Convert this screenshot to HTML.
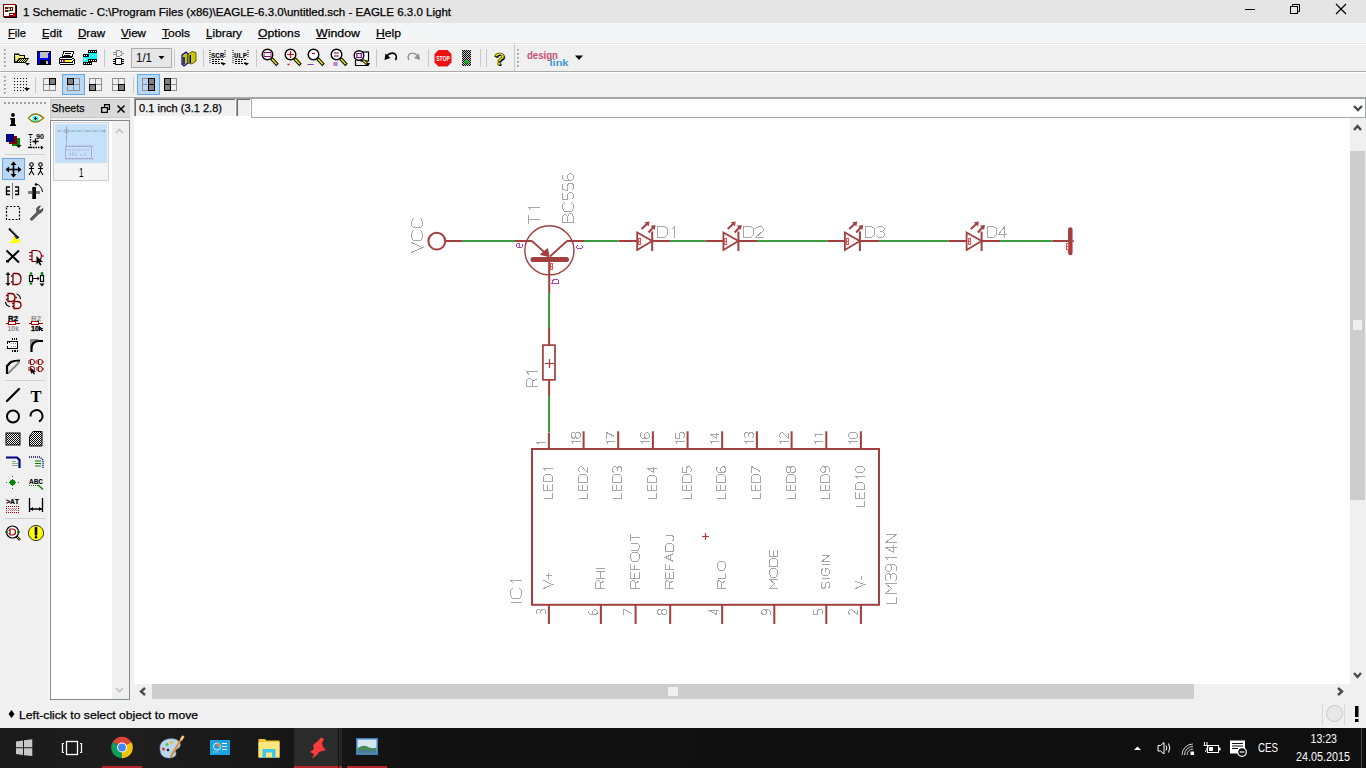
<!DOCTYPE html>
<html><head><meta charset="utf-8">
<style>
*{margin:0;padding:0}
html,body{width:1366px;height:768px;overflow:hidden;background:#f0f0f0}
svg{display:block;font-family:"Liberation Sans",sans-serif}
.ui{font-size:11.5px;fill:#000;stroke:#000;stroke-width:0.25px}
</style></head><body>
<svg width="1366" height="768" viewBox="0 0 1366 768">
<!-- base -->
<rect x="0" y="0" width="1366" height="768" fill="#f0f0f0"/>
<!-- title bar -->
<rect x="0" y="0" width="1366" height="23" fill="#e5e5e5"/>
<text class="ui" x="23" y="16" textLength="428" lengthAdjust="spacingAndGlyphs" font-size="12">1 Schematic - C:\Program Files (x86)\EAGLE-6.3.0\untitled.sch - EAGLE 6.3.0 Light</text>
<!-- menu bar -->
<rect x="0" y="23" width="1366" height="20" fill="#f4f5f7"/>
<rect x="0" y="43" width="1366" height="1" fill="#e3e3e3"/>
<rect x="0" y="44" width="1366" height="1" fill="#ffffff"/>
<g class="ui" font-size="12">
<text x="8" y="36.5" textLength="18" lengthAdjust="spacingAndGlyphs">File</text>
<text x="42" y="36.5" textLength="20" lengthAdjust="spacingAndGlyphs">Edit</text>
<text x="78" y="36.5" textLength="27" lengthAdjust="spacingAndGlyphs">Draw</text>
<text x="121" y="36.5" textLength="25" lengthAdjust="spacingAndGlyphs">View</text>
<text x="162" y="36.5" textLength="28" lengthAdjust="spacingAndGlyphs">Tools</text>
<text x="206" y="36.5" textLength="36" lengthAdjust="spacingAndGlyphs">Library</text>
<text x="258" y="36.5" textLength="42" lengthAdjust="spacingAndGlyphs">Options</text>
<text x="316" y="36.5" textLength="44" lengthAdjust="spacingAndGlyphs">Window</text>
<text x="376" y="36.5" textLength="25" lengthAdjust="spacingAndGlyphs">Help</text>
</g>
<g fill="#000">
<rect x="8" y="38" width="7" height="1"/>
<rect x="42" y="38" width="7" height="1"/>
<rect x="78" y="38" width="8" height="1"/>
<rect x="121" y="38" width="8" height="1"/>
<rect x="162" y="38" width="7" height="1"/>
<rect x="206" y="38" width="6" height="1"/>
<rect x="258" y="38" width="9" height="1"/>
<rect x="316" y="38" width="11" height="1"/>
<rect x="376" y="38" width="9" height="1"/>
</g>
<!-- window buttons -->
<g stroke="#000" stroke-width="1" fill="none">
<line x1="1245" y1="9.5" x2="1255" y2="9.5"/>
<rect x="1290.5" y="6.5" width="7" height="7"/>
<path d="M1292.5 6.5 V4.5 H1299.5 V11.5 H1297.5"/>
<path d="M1336 4 L1346 14 M1346 4 L1336 14" stroke-width="1.2"/>
</g>
<!-- toolbar 1 -->
<rect x="0" y="45" width="1366" height="26" fill="#f0f0f0"/>
<rect x="0" y="71" width="1366" height="1" fill="#ababab"/>
<rect x="0" y="72" width="1366" height="1" fill="#ffffff"/>
<!-- toolbar 2 -->
<rect x="0" y="73" width="1366" height="24" fill="#f0f0f0"/>
<rect x="0" y="97" width="1366" height="1" fill="#ababab"/>
<rect x="0" y="98" width="1366" height="1" fill="#a3a6ae"/>

<!-- command row -->
<rect x="0" y="98" width="134" height="1" fill="#ffffff"/>
<rect x="134" y="98" width="1232" height="1" fill="#a0a0a0"/>
<rect x="134" y="99" width="102" height="18" fill="#f0f0f0"/>
<rect x="134" y="98" width="1" height="19" fill="#a0a0a0"/>
<rect x="135" y="99" width="1" height="17" fill="#696969"/>
<rect x="135" y="99" width="100" height="1" fill="#696969"/>
<rect x="235" y="99" width="1" height="18" fill="#ffffff"/>
<rect x="134" y="116" width="102" height="1" fill="#ffffff"/>
<text class="ui" x="139" y="112" textLength="83" lengthAdjust="spacingAndGlyphs" font-size="12">0.1 inch (3.1 2.8)</text>
<rect x="236" y="99" width="15" height="18" fill="#f0f0f0"/>
<rect x="236" y="98" width="1" height="19" fill="#a0a0a0"/>
<rect x="237" y="99" width="1" height="17" fill="#696969"/>
<rect x="237" y="99" width="13" height="1" fill="#696969"/>
<rect x="250" y="99" width="1" height="18" fill="#ffffff"/>
<rect x="236" y="116" width="15" height="1" fill="#ffffff"/>
<rect x="251" y="99" width="1115" height="18" fill="#ffffff"/>
<rect x="251" y="98" width="1" height="20" fill="#a3a6ae"/>
<rect x="1365" y="98" width="1" height="20" fill="#a3a6ae"/>
<rect x="251" y="117" width="1115" height="1" fill="#a3a6ae"/>
<path d="M1354 106 L1358 110 L1362 106" stroke="#4a4a4a" stroke-width="2.4" fill="none" stroke-linejoin="miter"/>

<!-- canvas -->
<rect x="134" y="117" width="1216" height="567" fill="#ffffff"/>
<rect x="251" y="117" width="1115" height="1" fill="#a3a6ae"/>
<!-- v scrollbar -->
<rect x="1350" y="118" width="16" height="566" fill="#f0f0f0"/>
<rect x="1350" y="151" width="15" height="349" fill="#cdcdcd"/>
<rect x="1353" y="320" width="9" height="10" fill="#f0f0f0"/>
<path d="M1354 130 L1357.5 126 L1361 130" stroke="#4a4a4a" stroke-width="2.4" fill="none" stroke-linejoin="miter"/>
<path d="M1354 673 L1357.5 677 L1361 673" stroke="#4a4a4a" stroke-width="2.4" fill="none" stroke-linejoin="miter"/>
<!-- h scrollbar -->
<rect x="134" y="684" width="1232" height="15" fill="#f0f0f0"/>
<rect x="152" y="684" width="1042" height="15" fill="#cdcdcd"/>
<rect x="668" y="687" width="10" height="9" fill="#f0f0f0"/>
<path d="M145 688 L141 691.5 L145 695" stroke="#4a4a4a" stroke-width="2.4" fill="none" stroke-linejoin="miter"/>
<path d="M1338 688 L1342 691.5 L1338 695" stroke="#4a4a4a" stroke-width="2.4" fill="none" stroke-linejoin="miter"/>

<!-- left toolbar panel -->
<rect x="49" y="99" width="1" height="600" fill="#ffffff"/>
<rect x="50" y="99" width="1" height="600" fill="#c4c4c4"/>
<!-- sheets panel -->
<rect x="51" y="99" width="79" height="19" fill="#d9d9d9"/>
<rect x="51" y="99" width="79" height="1" fill="#c8c8c8"/>
<rect x="51" y="117" width="79" height="1" fill="#c8c8c8"/>
<text class="ui" x="51.5" y="112" textLength="33" lengthAdjust="spacingAndGlyphs" font-size="12">Sheets</text>
<g fill="none" stroke="#000" stroke-width="1.3">
<rect x="101.6" y="107.6" width="5.8" height="4.8"/>
<path d="M104.6 107 V104.6 H109.4 V109.4 H107.5"/>
<path d="M117.5 105.5 L124.5 112.5 M124.5 105.5 L117.5 112.5" stroke-width="1.5"/>
</g>
<rect x="50.5" y="120.5" width="79" height="579" fill="#ffffff" stroke="#828790"/>
<rect x="112" y="121" width="17" height="578" fill="#f0f0f0"/>
<path d="M116 133 L119.5 129.5 L123 133" stroke="#c0c0c0" stroke-width="1.6" fill="none"/>
<path d="M116 688 L119.5 691.5 L123 688" stroke="#c0c0c0" stroke-width="1.6" fill="none"/>
<rect x="130" y="99" width="4" height="600" fill="#f0f0f0"/>

<!-- status bar -->
<rect x="0" y="700" width="1366" height="28" fill="#f0f0f0"/>
<text class="ui" x="19" y="718.5" textLength="179" lengthAdjust="spacingAndGlyphs" font-size="12">Left-click to select object to move</text>
<path d="M11.5 710 L14.5 714 L11.5 718 L8.5 714 Z" fill="#000"/>
<rect x="1322" y="704" width="1" height="22" fill="#d8d8d8"/>
<rect x="1344" y="704" width="1" height="22" fill="#d8d8d8"/>
<circle cx="1334.5" cy="713.5" r="8" fill="#e8e8e8" stroke="#c8c8c8"/>
<rect x="1355" y="706" width="3.5" height="11" fill="#000"/>
<rect x="1355" y="719" width="3.5" height="3" fill="#000"/>

<!-- taskbar bg drawn in icons -->


<g id="schematic">
<rect x="462" y="240.0" width="53" height="2" fill="#3d9c3d"/>
<rect x="584" y="240.0" width="34.5" height="2" fill="#3d9c3d"/>
<rect x="670" y="240.0" width="35.5" height="2" fill="#3d9c3d"/>
<rect x="757" y="240.0" width="70.5" height="2" fill="#3d9c3d"/>
<rect x="879" y="240.0" width="69.5" height="2" fill="#3d9c3d"/>
<rect x="1000" y="240.0" width="52.5" height="2" fill="#3d9c3d"/>
<rect x="548.0" y="293" width="2" height="35" fill="#3d9c3d"/>
<rect x="548.0" y="396" width="2" height="36" fill="#3d9c3d"/>
<circle cx="436.8" cy="241.2" r="8.4" fill="none" stroke="#a23f3f" stroke-width="2"/>
<rect x="445" y="240.0" width="17" height="2" fill="#a23f3f"/>
<rect x="515" y="240.0" width="17" height="2" fill="#a23f3f"/>
<rect x="567" y="240.0" width="17.5" height="2" fill="#a23f3f"/>
<circle cx="549.4" cy="250.3" r="24.6" fill="none" stroke="#a23f3f" stroke-width="1.4"/>
<line x1="532" y1="241" x2="548.5" y2="256" stroke="#a23f3f" stroke-width="1.8"/>
<line x1="567" y1="241" x2="550" y2="256.5" stroke="#a23f3f" stroke-width="1.8"/>
<path d="M549 256.5 L540.5 254.5 L547.5 248.5 Z" fill="#a23f3f" stroke="#a23f3f" stroke-width="1"/>
<line x1="533" y1="259.5" x2="566.5" y2="259.5" stroke="#a23f3f" stroke-width="5" stroke-linecap="round"/>
<rect x="548.2" y="257" width="2" height="36" fill="#a23f3f"/>
<rect x="550.5" y="263.5" width="2" height="6" fill="none" stroke="#ff4a4a" stroke-width="1" shape-rendering="crispEdges"/><rect x="551" y="266" width="1" height="1" fill="#ff4a4a"/>
<path d="M519.5 247.5 L519.5 243.5 L517.5 243.5 L516.5 244.5 L516.5 246.5 L517.5 247.5 L521.5 247.5 L522.5 246.5 L522.5 243.5" fill="none" stroke="#a844b4" stroke-width="1.0" shape-rendering="crispEdges"/>
<path d="M577.5 245.5 L576.5 246.5 L576.5 247.5 L577.5 248.5 L581.5 248.5 L582.5 247.5 L582.5 246.5 L581.5 245.5" fill="none" stroke="#a844b4" stroke-width="1.0" shape-rendering="crispEdges"/>
<path d="M550.5 283.5 L558.5 283.5 L558.5 280.5 L557.5 279.5 L554.5 279.5 L552.5 280.5 L552.5 283.5" fill="none" stroke="#a844b4" stroke-width="1.0" shape-rendering="crispEdges"/>
<path d="M528.5 223.5 L528.5 214.5 M528.5 219.5 L539.5 219.5 M531.5 210.5 L528.5 207.5 L539.5 207.5" fill="none" stroke="#a6a6a6" stroke-width="1.0" shape-rendering="crispEdges"/>
<path d="M562.5 222.5 L573.5 222.5 L573.5 216.5 L571.5 213.5 L569.5 213.5 L567.5 216.5 L567.5 222.5 M567.5 216.5 L565.5 214.5 L564.5 214.5 L562.5 216.5 L562.5 222.5 M564.5 202.5 L562.5 204.5 L562.5 208.5 L564.5 211.5 L571.5 211.5 L573.5 208.5 L573.5 204.5 L571.5 202.5 M562.5 192.5 L562.5 199.5 L567.5 199.5 L567.5 194.5 L569.5 192.5 L571.5 192.5 L573.5 194.5 L573.5 197.5 L571.5 199.5 M562.5 183.5 L562.5 189.5 L567.5 190.5 L567.5 184.5 L569.5 183.5 L571.5 183.5 L573.5 184.5 L573.5 188.5 L571.5 190.5 M562.5 174.5 L562.5 174.5 L562.5 178.5 L564.5 180.5 L571.5 180.5 L573.5 178.5 L573.5 175.5 L571.5 173.5 L569.5 173.5 L567.5 175.5 L567.5 178.5 L569.5 180.5" fill="none" stroke="#a6a6a6" stroke-width="1.0" shape-rendering="crispEdges"/>
<path d="M411.5 252.5 L422.5 247.5 L411.5 242.5 M413.5 230.5 L411.5 233.5 L411.5 237.5 L413.5 240.5 L420.5 240.5 L422.5 237.5 L422.5 233.5 L420.5 230.5 M413.5 218.5 L411.5 221.5 L411.5 225.5 L413.5 227.5 L420.5 227.5 L422.5 225.5 L422.5 221.5 L420.5 218.5" fill="none" stroke="#a6a6a6" stroke-width="1.0" shape-rendering="crispEdges"/>
<rect x="618.5" y="240.0" width="18.700000000000045" height="2" fill="#a23f3f"/>
<rect x="652.2" y="240.0" width="17.799999999999955" height="2" fill="#a23f3f"/>
<path d="M637.2 232.5 L652.2 241 L637.2 250 Z" fill="none" stroke="#a23f3f" stroke-width="1.8" stroke-linejoin="miter"/>
<rect x="651.2" y="231.5" width="2" height="19.5" fill="#a23f3f"/>
<line x1="641.5" y1="229" x2="648.0" y2="223.0" stroke="#a23f3f" stroke-width="2"/>
<path d="M649.5 221.5 L644.5 222.3 L648.7 226.5 Z" fill="#a23f3f"/>
<line x1="648.5" y1="232.5" x2="654.0" y2="226.5" stroke="#a23f3f" stroke-width="2"/>
<path d="M655.5 225 L650.5 225.8 L654.7 230 Z" fill="#a23f3f"/>
<rect x="638.5" y="238.5" width="2" height="6" fill="none" stroke="#ff4a4a" stroke-width="1" shape-rendering="crispEdges"/><rect x="639" y="241" width="1" height="1" fill="#ff4a4a"/>
<path d="M657.5 226.5 L657.5 237.5 L664.5 237.5 L667.5 234.5 L667.5 228.5 L664.5 226.5 Z M671.5 229.5 L674.5 226.5 L674.5 237.5" fill="none" stroke="#a6a6a6" stroke-width="1.0" shape-rendering="crispEdges"/>
<rect x="705.5" y="240.0" width="17.899999999999977" height="2" fill="#a23f3f"/>
<rect x="738.4" y="240.0" width="18.600000000000023" height="2" fill="#a23f3f"/>
<path d="M723.4 232.5 L738.4 241 L723.4 250 Z" fill="none" stroke="#a23f3f" stroke-width="1.8" stroke-linejoin="miter"/>
<rect x="737.4" y="231.5" width="2" height="19.5" fill="#a23f3f"/>
<line x1="727.6999999999999" y1="229" x2="734.1999999999999" y2="223.0" stroke="#a23f3f" stroke-width="2"/>
<path d="M735.6999999999999 221.5 L730.6999999999999 222.3 L734.9 226.5 Z" fill="#a23f3f"/>
<line x1="734.6999999999999" y1="232.5" x2="740.1999999999999" y2="226.5" stroke="#a23f3f" stroke-width="2"/>
<path d="M741.6999999999999 225 L736.6999999999999 225.8 L740.9 230 Z" fill="#a23f3f"/>
<rect x="724.5" y="238.5" width="2" height="6" fill="none" stroke="#ff4a4a" stroke-width="1" shape-rendering="crispEdges"/><rect x="725" y="241" width="1" height="1" fill="#ff4a4a"/>
<path d="M743.5 226.5 L743.5 237.5 L750.5 237.5 L753.5 234.5 L753.5 228.5 L750.5 226.5 Z M755.5 228.5 L758.5 226.5 L761.5 226.5 L763.5 228.5 L763.5 230.5 L755.5 237.5 L763.5 237.5" fill="none" stroke="#a6a6a6" stroke-width="1.0" shape-rendering="crispEdges"/>
<rect x="827.5" y="240.0" width="17.399999999999977" height="2" fill="#a23f3f"/>
<rect x="859.9" y="240.0" width="19.100000000000023" height="2" fill="#a23f3f"/>
<path d="M844.9 232.5 L859.9 241 L844.9 250 Z" fill="none" stroke="#a23f3f" stroke-width="1.8" stroke-linejoin="miter"/>
<rect x="858.9" y="231.5" width="2" height="19.5" fill="#a23f3f"/>
<line x1="849.1999999999999" y1="229" x2="855.6999999999999" y2="223.0" stroke="#a23f3f" stroke-width="2"/>
<path d="M857.1999999999999 221.5 L852.1999999999999 222.3 L856.4 226.5 Z" fill="#a23f3f"/>
<line x1="856.1999999999999" y1="232.5" x2="861.6999999999999" y2="226.5" stroke="#a23f3f" stroke-width="2"/>
<path d="M863.1999999999999 225 L858.1999999999999 225.8 L862.4 230 Z" fill="#a23f3f"/>
<rect x="846.5" y="238.5" width="2" height="6" fill="none" stroke="#ff4a4a" stroke-width="1" shape-rendering="crispEdges"/><rect x="847" y="241" width="1" height="1" fill="#ff4a4a"/>
<path d="M865.5 226.5 L865.5 237.5 L871.5 237.5 L874.5 234.5 L874.5 228.5 L871.5 226.5 Z M876.5 228.5 L878.5 226.5 L882.5 226.5 L884.5 228.5 L884.5 229.5 L882.5 231.5 L879.5 231.5 M882.5 231.5 L884.5 233.5 L884.5 235.5 L882.5 237.5 L878.5 237.5 L876.5 235.5" fill="none" stroke="#a6a6a6" stroke-width="1.0" shape-rendering="crispEdges"/>
<rect x="948.5" y="240.0" width="18.100000000000023" height="2" fill="#a23f3f"/>
<rect x="981.6" y="240.0" width="18.399999999999977" height="2" fill="#a23f3f"/>
<path d="M966.6 232.5 L981.6 241 L966.6 250 Z" fill="none" stroke="#a23f3f" stroke-width="1.8" stroke-linejoin="miter"/>
<rect x="980.6" y="231.5" width="2" height="19.5" fill="#a23f3f"/>
<line x1="970.9" y1="229" x2="977.4" y2="223.0" stroke="#a23f3f" stroke-width="2"/>
<path d="M978.9 221.5 L973.9 222.3 L978.1 226.5 Z" fill="#a23f3f"/>
<line x1="977.9" y1="232.5" x2="983.4" y2="226.5" stroke="#a23f3f" stroke-width="2"/>
<path d="M984.9 225 L979.9 225.8 L984.1 230 Z" fill="#a23f3f"/>
<rect x="968.5" y="238.5" width="2" height="6" fill="none" stroke="#ff4a4a" stroke-width="1" shape-rendering="crispEdges"/><rect x="969" y="241" width="1" height="1" fill="#ff4a4a"/>
<path d="M987.5 226.5 L987.5 237.5 L993.5 237.5 L996.5 234.5 L996.5 228.5 L993.5 226.5 Z M1004.5 237.5 L1004.5 226.5 L998.5 234.5 L1006.5 234.5" fill="none" stroke="#a6a6a6" stroke-width="1.0" shape-rendering="crispEdges"/>
<rect x="1052.5" y="240.0" width="19.5" height="2" fill="#a23f3f"/>
<line x1="1070.3" y1="229.5" x2="1070.3" y2="253" stroke="#a23f3f" stroke-width="4.5" stroke-linecap="round"/>
<rect x="1072" y="240.25" width="2" height="1.5" fill="#a23f3f"/>
<rect x="1066.5" y="243.5" width="2" height="6" fill="none" stroke="#ff4a4a" stroke-width="1" shape-rendering="crispEdges"/><rect x="1067" y="246" width="1" height="1" fill="#ff4a4a"/>
<rect x="548.1" y="328" width="2" height="17" fill="#a23f3f"/>
<rect x="542.9" y="345.1" width="12.1" height="34.7" fill="none" stroke="#a23f3f" stroke-width="1.7"/>
<rect x="548.1" y="380" width="2" height="16" fill="#a23f3f"/>
<rect x="545" y="362.9" width="9" height="1.2" fill="#a23f3f"/>
<rect x="548.9" y="359" width="1.2" height="9" fill="#a23f3f"/>
<path d="M537.5 386.5 L526.5 386.5 L526.5 380.5 L528.5 378.5 L530.5 378.5 L532.5 380.5 L532.5 386.5 M532.5 381.5 L537.5 378.5 M529.5 375.5 L526.5 371.5 L537.5 371.5" fill="none" stroke="#a6a6a6" stroke-width="1.0" shape-rendering="crispEdges"/>
<rect x="532" y="449" width="347" height="155.8" fill="none" stroke="#a23f3f" stroke-width="2"/>
<rect x="547.9" y="432.5" width="2" height="16.5" fill="#a23f3f"/>
<path d="M539.5 444.5 L536.5 442.5 L545.5 442.5" fill="none" stroke="#a6a6a6" stroke-width="1.0" shape-rendering="crispEdges"/>
<path d="M543.5 498.5 L552.5 498.5 L552.5 492.5 M543.5 483.5 L543.5 490.5 L552.5 490.5 L552.5 483.5 M547.5 490.5 L547.5 484.5 M543.5 481.5 L552.5 481.5 L552.5 476.5 L550.5 474.5 L545.5 474.5 L543.5 476.5 Z M546.5 471.5 L543.5 468.5 L552.5 468.5" fill="none" stroke="#a6a6a6" stroke-width="1.0" shape-rendering="crispEdges"/>
<rect x="582.6" y="431.3" width="2" height="17.69999999999999" fill="#a23f3f"/>
<path d="M573.5 444.5 L571.5 441.5 L580.5 441.5 M571.5 436.5 L571.5 433.5 L572.5 432.5 L574.5 432.5 L575.5 433.5 L575.5 436.5 L574.5 438.5 L572.5 438.5 Z M575.5 436.5 L576.5 438.5 L578.5 438.5 L580.5 436.5 L580.5 433.5 L578.5 432.5 L576.5 432.5 L575.5 433.5" fill="none" stroke="#a6a6a6" stroke-width="1.0" shape-rendering="crispEdges"/>
<path d="M578.5 498.5 L587.5 498.5 L587.5 492.5 M578.5 484.5 L578.5 490.5 L587.5 490.5 L587.5 484.5 M582.5 490.5 L582.5 484.5 M578.5 482.5 L587.5 482.5 L587.5 476.5 L585.5 474.5 L580.5 474.5 L578.5 476.5 Z M580.5 472.5 L578.5 470.5 L578.5 468.5 L580.5 466.5 L581.5 466.5 L587.5 472.5 L587.5 466.5" fill="none" stroke="#a6a6a6" stroke-width="1.0" shape-rendering="crispEdges"/>
<rect x="617.2" y="431.3" width="2" height="17.69999999999999" fill="#a23f3f"/>
<path d="M608.5 444.5 L606.5 441.5 L614.5 441.5 M606.5 438.5 L606.5 432.5 L614.5 436.5" fill="none" stroke="#a6a6a6" stroke-width="1.0" shape-rendering="crispEdges"/>
<path d="M612.5 498.5 L621.5 498.5 L621.5 492.5 M612.5 484.5 L612.5 490.5 L621.5 490.5 L621.5 484.5 M616.5 490.5 L616.5 484.5 M612.5 482.5 L621.5 482.5 L621.5 476.5 L619.5 474.5 L614.5 474.5 L612.5 476.5 Z M614.5 472.5 L612.5 471.5 L612.5 468.5 L614.5 466.5 L615.5 466.5 L617.5 468.5 L617.5 470.5 M617.5 468.5 L618.5 466.5 L620.5 466.5 L621.5 468.5 L621.5 471.5 L620.5 472.5" fill="none" stroke="#a6a6a6" stroke-width="1.0" shape-rendering="crispEdges"/>
<rect x="651.9" y="431.3" width="2" height="17.69999999999999" fill="#a23f3f"/>
<path d="M643.5 444.5 L640.5 441.5 L649.5 441.5 M641.5 432.5 L640.5 433.5 L640.5 436.5 L642.5 438.5 L647.5 438.5 L649.5 436.5 L649.5 434.5 L647.5 432.5 L646.5 432.5 L644.5 434.5 L644.5 436.5 L645.5 438.5" fill="none" stroke="#a6a6a6" stroke-width="1.0" shape-rendering="crispEdges"/>
<path d="M647.5 498.5 L656.5 498.5 L656.5 492.5 M647.5 484.5 L647.5 490.5 L656.5 490.5 L656.5 484.5 M651.5 490.5 L651.5 484.5 M647.5 482.5 L656.5 482.5 L656.5 477.5 L654.5 475.5 L649.5 475.5 L647.5 477.5 Z M656.5 468.5 L647.5 468.5 L653.5 472.5 L653.5 466.5" fill="none" stroke="#a6a6a6" stroke-width="1.0" shape-rendering="crispEdges"/>
<rect x="686.6" y="431.3" width="2" height="17.69999999999999" fill="#a23f3f"/>
<path d="M677.5 444.5 L675.5 441.5 L684.5 441.5 M675.5 432.5 L675.5 438.5 L679.5 438.5 L679.5 433.5 L680.5 432.5 L682.5 432.5 L684.5 433.5 L684.5 436.5 L682.5 438.5" fill="none" stroke="#a6a6a6" stroke-width="1.0" shape-rendering="crispEdges"/>
<path d="M682.5 498.5 L691.5 498.5 L691.5 492.5 M682.5 484.5 L682.5 490.5 L691.5 490.5 L691.5 484.5 M686.5 490.5 L686.5 484.5 M682.5 482.5 L691.5 482.5 L691.5 476.5 L689.5 474.5 L684.5 474.5 L682.5 476.5 Z M682.5 466.5 L682.5 472.5 L686.5 472.5 L686.5 468.5 L687.5 466.5 L689.5 466.5 L691.5 468.5 L691.5 470.5 L689.5 472.5" fill="none" stroke="#a6a6a6" stroke-width="1.0" shape-rendering="crispEdges"/>
<rect x="721.2" y="431.3" width="2" height="17.69999999999999" fill="#a23f3f"/>
<path d="M712.5 444.5 L710.5 441.5 L718.5 441.5 M718.5 434.5 L710.5 434.5 L716.5 438.5 L716.5 432.5" fill="none" stroke="#a6a6a6" stroke-width="1.0" shape-rendering="crispEdges"/>
<path d="M716.5 498.5 L725.5 498.5 L725.5 492.5 M716.5 484.5 L716.5 490.5 L725.5 490.5 L725.5 484.5 M720.5 490.5 L720.5 484.5 M716.5 482.5 L725.5 482.5 L725.5 476.5 L723.5 474.5 L718.5 474.5 L716.5 476.5 Z M717.5 467.5 L716.5 467.5 L716.5 470.5 L718.5 472.5 L724.5 472.5 L725.5 470.5 L725.5 468.5 L724.5 466.5 L722.5 466.5 L720.5 468.5 L720.5 470.5 L722.5 472.5" fill="none" stroke="#a6a6a6" stroke-width="1.0" shape-rendering="crispEdges"/>
<rect x="755.9" y="431.3" width="2" height="17.69999999999999" fill="#a23f3f"/>
<path d="M747.5 444.5 L744.5 441.5 L753.5 441.5 M746.5 438.5 L744.5 436.5 L744.5 433.5 L746.5 432.5 L747.5 432.5 L748.5 433.5 L748.5 436.5 M748.5 433.5 L750.5 432.5 L751.5 432.5 L753.5 433.5 L753.5 436.5 L751.5 438.5" fill="none" stroke="#a6a6a6" stroke-width="1.0" shape-rendering="crispEdges"/>
<path d="M751.5 498.5 L760.5 498.5 L760.5 492.5 M751.5 484.5 L751.5 490.5 L760.5 490.5 L760.5 484.5 M755.5 490.5 L755.5 484.5 M751.5 482.5 L760.5 482.5 L760.5 476.5 L758.5 474.5 L753.5 474.5 L751.5 476.5 Z M751.5 472.5 L751.5 466.5 L760.5 471.5" fill="none" stroke="#a6a6a6" stroke-width="1.0" shape-rendering="crispEdges"/>
<rect x="790.6" y="431.3" width="2" height="17.69999999999999" fill="#a23f3f"/>
<path d="M781.5 444.5 L779.5 441.5 L788.5 441.5 M781.5 438.5 L779.5 436.5 L779.5 434.5 L781.5 432.5 L782.5 432.5 L788.5 438.5 L788.5 432.5" fill="none" stroke="#a6a6a6" stroke-width="1.0" shape-rendering="crispEdges"/>
<path d="M786.5 498.5 L795.5 498.5 L795.5 492.5 M786.5 484.5 L786.5 490.5 L795.5 490.5 L795.5 484.5 M790.5 490.5 L790.5 484.5 M786.5 482.5 L795.5 482.5 L795.5 476.5 L793.5 474.5 L788.5 474.5 L786.5 476.5 Z M786.5 471.5 L786.5 468.5 L787.5 466.5 L789.5 466.5 L790.5 468.5 L790.5 471.5 L789.5 472.5 L787.5 472.5 Z M790.5 471.5 L791.5 472.5 L793.5 472.5 L795.5 471.5 L795.5 468.5 L793.5 466.5 L791.5 466.5 L790.5 468.5" fill="none" stroke="#a6a6a6" stroke-width="1.0" shape-rendering="crispEdges"/>
<rect x="825.3" y="431.3" width="2" height="17.69999999999999" fill="#a23f3f"/>
<path d="M816.5 444.5 L814.5 441.5 L822.5 441.5 M816.5 437.5 L814.5 434.5 L822.5 434.5" fill="none" stroke="#a6a6a6" stroke-width="1.0" shape-rendering="crispEdges"/>
<path d="M820.5 498.5 L829.5 498.5 L829.5 492.5 M820.5 484.5 L820.5 490.5 L829.5 490.5 L829.5 484.5 M825.5 490.5 L825.5 484.5 M820.5 482.5 L829.5 482.5 L829.5 476.5 L827.5 474.5 L823.5 474.5 L820.5 476.5 Z M829.5 471.5 L829.5 471.5 L829.5 468.5 L827.5 466.5 L822.5 466.5 L820.5 468.5 L820.5 470.5 L822.5 472.5 L824.5 472.5 L825.5 470.5 L825.5 468.5 L824.5 466.5" fill="none" stroke="#a6a6a6" stroke-width="1.0" shape-rendering="crispEdges"/>
<rect x="859.9" y="431.3" width="2" height="17.69999999999999" fill="#a23f3f"/>
<path d="M851.5 444.5 L848.5 441.5 L857.5 441.5 M848.5 436.5 L848.5 434.5 L850.5 432.5 L855.5 432.5 L857.5 434.5 L857.5 436.5 L855.5 438.5 L850.5 438.5 Z" fill="none" stroke="#a6a6a6" stroke-width="1.0" shape-rendering="crispEdges"/>
<path d="M855.5 506.5 L864.5 506.5 L864.5 500.5 M855.5 491.5 L855.5 498.5 L864.5 498.5 L864.5 491.5 M859.5 498.5 L859.5 492.5 M855.5 489.5 L864.5 489.5 L864.5 484.5 L862.5 482.5 L857.5 482.5 L855.5 484.5 Z M858.5 479.5 L855.5 476.5 L864.5 476.5 M855.5 470.5 L855.5 468.5 L857.5 466.5 L862.5 466.5 L864.5 468.5 L864.5 470.5 L862.5 472.5 L857.5 472.5 Z" fill="none" stroke="#a6a6a6" stroke-width="1.0" shape-rendering="crispEdges"/>
<rect x="547.9" y="605" width="2" height="19" fill="#a23f3f"/>
<path d="M537.5 614.5 L536.5 613.5 L536.5 610.5 L537.5 609.5 L539.5 609.5 L540.5 610.5 L540.5 612.5 M540.5 610.5 L542.5 609.5 L544.5 609.5 L545.5 610.5 L545.5 613.5 L544.5 614.5" fill="none" stroke="#a6a6a6" stroke-width="1.0" shape-rendering="crispEdges"/>
<path d="M543.5 588.5 L552.5 584.5 L543.5 580.5 M548.5 578.5 L548.5 572.5 M545.5 575.5 L551.5 575.5" fill="none" stroke="#a6a6a6" stroke-width="1.0" shape-rendering="crispEdges"/>
<rect x="599.9" y="605" width="2" height="19" fill="#a23f3f"/>
<path d="M588.5 610.5 L588.5 610.5 L588.5 612.5 L590.5 614.5 L595.5 614.5 L597.5 613.5 L597.5 611.5 L595.5 609.5 L594.5 609.5 L592.5 611.5 L592.5 613.5 L593.5 614.5" fill="none" stroke="#a6a6a6" stroke-width="1.0" shape-rendering="crispEdges"/>
<path d="M604.5 588.5 L595.5 588.5 L595.5 582.5 L597.5 580.5 L598.5 580.5 L600.5 582.5 L600.5 588.5 M600.5 583.5 L604.5 580.5 M595.5 578.5 L604.5 578.5 M595.5 571.5 L604.5 571.5 M600.5 578.5 L600.5 571.5 M595.5 568.5 L604.5 568.5" fill="none" stroke="#a6a6a6" stroke-width="1.0" shape-rendering="crispEdges"/>
<rect x="634.6" y="605" width="2" height="19" fill="#a23f3f"/>
<path d="M623.5 614.5 L623.5 609.5 L632.5 613.5" fill="none" stroke="#a6a6a6" stroke-width="1.0" shape-rendering="crispEdges"/>
<path d="M639.5 588.5 L630.5 588.5 L630.5 582.5 L632.5 580.5 L633.5 580.5 L635.5 582.5 L635.5 588.5 M635.5 583.5 L639.5 580.5 M630.5 571.5 L630.5 578.5 L639.5 578.5 L639.5 571.5 M634.5 578.5 L634.5 572.5 M630.5 563.5 L630.5 569.5 L639.5 569.5 M634.5 569.5 L634.5 564.5 M630.5 558.5 L630.5 554.5 L632.5 552.5 L637.5 552.5 L639.5 554.5 L639.5 558.5 L637.5 561.5 L632.5 561.5 Z M630.5 550.5 L637.5 550.5 L639.5 547.5 L639.5 545.5 L637.5 543.5 L630.5 543.5 M630.5 540.5 L630.5 533.5 M630.5 537.5 L639.5 537.5" fill="none" stroke="#a6a6a6" stroke-width="1.0" shape-rendering="crispEdges"/>
<rect x="669.2" y="605" width="2" height="19" fill="#a23f3f"/>
<path d="M657.5 613.5 L657.5 610.5 L659.5 609.5 L660.5 609.5 L661.5 610.5 L661.5 613.5 L660.5 614.5 L659.5 614.5 Z M661.5 613.5 L663.5 614.5 L665.5 614.5 L666.5 613.5 L666.5 610.5 L665.5 609.5 L663.5 609.5 L661.5 610.5" fill="none" stroke="#a6a6a6" stroke-width="1.0" shape-rendering="crispEdges"/>
<path d="M673.5 588.5 L665.5 588.5 L665.5 582.5 L666.5 580.5 L667.5 580.5 L669.5 582.5 L669.5 588.5 M669.5 583.5 L673.5 580.5 M665.5 571.5 L665.5 578.5 L673.5 578.5 L673.5 571.5 M669.5 578.5 L669.5 572.5 M665.5 563.5 L665.5 569.5 L673.5 569.5 M669.5 569.5 L669.5 564.5 M673.5 561.5 L665.5 557.5 L673.5 553.5 M670.5 559.5 L670.5 554.5 M665.5 551.5 L673.5 551.5 L673.5 545.5 L671.5 543.5 L667.5 543.5 L665.5 545.5 Z M665.5 535.5 L672.5 535.5 L673.5 537.5 L673.5 539.5 L672.5 541.5" fill="none" stroke="#a6a6a6" stroke-width="1.0" shape-rendering="crispEdges"/>
<rect x="721.2" y="605" width="2" height="19" fill="#a23f3f"/>
<path d="M718.5 610.5 L709.5 610.5 L716.5 614.5 L716.5 609.5" fill="none" stroke="#a6a6a6" stroke-width="1.0" shape-rendering="crispEdges"/>
<path d="M725.5 588.5 L717.5 588.5 L717.5 582.5 L718.5 580.5 L719.5 580.5 L721.5 582.5 L721.5 588.5 M721.5 583.5 L725.5 580.5 M717.5 578.5 L725.5 578.5 L725.5 572.5 M717.5 567.5 L717.5 563.5 L719.5 561.5 L723.5 561.5 L725.5 563.5 L725.5 567.5 L723.5 570.5 L719.5 570.5 Z" fill="none" stroke="#a6a6a6" stroke-width="1.0" shape-rendering="crispEdges"/>
<rect x="773.3" y="605" width="2" height="19" fill="#a23f3f"/>
<path d="M770.5 614.5 L770.5 613.5 L770.5 611.5 L768.5 609.5 L763.5 609.5 L761.5 611.5 L761.5 613.5 L763.5 614.5 L765.5 614.5 L766.5 613.5 L766.5 611.5 L765.5 609.5" fill="none" stroke="#a6a6a6" stroke-width="1.0" shape-rendering="crispEdges"/>
<path d="M777.5 588.5 L769.5 588.5 L774.5 583.5 L769.5 579.5 L777.5 579.5 M769.5 574.5 L769.5 570.5 L771.5 568.5 L775.5 568.5 L777.5 570.5 L777.5 574.5 L775.5 577.5 L771.5 577.5 Z M769.5 566.5 L777.5 566.5 L777.5 560.5 L775.5 558.5 L771.5 558.5 L769.5 560.5 Z M769.5 549.5 L769.5 556.5 L777.5 556.5 L777.5 549.5 M773.5 556.5 L773.5 550.5" fill="none" stroke="#a6a6a6" stroke-width="1.0" shape-rendering="crispEdges"/>
<rect x="825.3" y="605" width="2" height="19" fill="#a23f3f"/>
<path d="M813.5 609.5 L813.5 614.5 L817.5 614.5 L817.5 610.5 L819.5 609.5 L821.5 609.5 L822.5 610.5 L822.5 613.5 L821.5 614.5" fill="none" stroke="#a6a6a6" stroke-width="1.0" shape-rendering="crispEdges"/>
<path d="M822.5 582.5 L821.5 583.5 L821.5 586.5 L822.5 588.5 L824.5 588.5 L825.5 586.5 L825.5 583.5 L826.5 582.5 L828.5 582.5 L829.5 583.5 L829.5 586.5 L828.5 588.5 M821.5 578.5 L829.5 578.5 M822.5 568.5 L821.5 570.5 L821.5 573.5 L823.5 575.5 L827.5 575.5 L829.5 573.5 L829.5 570.5 L827.5 568.5 L825.5 568.5 L825.5 571.5 M821.5 564.5 L829.5 564.5 M829.5 561.5 L821.5 561.5 L829.5 555.5 L821.5 555.5" fill="none" stroke="#a6a6a6" stroke-width="1.0" shape-rendering="crispEdges"/>
<rect x="859.9" y="605" width="2" height="19" fill="#a23f3f"/>
<path d="M850.5 614.5 L848.5 613.5 L848.5 611.5 L850.5 609.5 L851.5 609.5 L857.5 614.5 L857.5 609.5" fill="none" stroke="#a6a6a6" stroke-width="1.0" shape-rendering="crispEdges"/>
<path d="M855.5 588.5 L864.5 584.5 L855.5 581.5 M861.5 579.5 L861.5 575.5" fill="none" stroke="#a6a6a6" stroke-width="1.0" shape-rendering="crispEdges"/>
<rect x="702" y="535.9" width="7" height="1.2" fill="#a23f3f"/>
<rect x="704.9" y="533" width="1.2" height="7" fill="#a23f3f"/>
<path d="M510.5 602.5 L521.5 602.5 M512.5 588.5 L510.5 590.5 L510.5 595.5 L512.5 598.5 L519.5 598.5 L521.5 595.5 L521.5 590.5 L519.5 588.5 M513.5 583.5 L510.5 580.5 L521.5 580.5" fill="none" stroke="#a6a6a6" stroke-width="1.0" shape-rendering="crispEdges"/>
<path d="M885.5 603.5 L896.5 603.5 L896.5 596.5 M896.5 593.5 L885.5 593.5 L891.5 588.5 L885.5 583.5 L896.5 583.5 M887.5 581.5 L885.5 579.5 L885.5 575.5 L887.5 573.5 L889.5 573.5 L890.5 575.5 L890.5 578.5 M890.5 575.5 L892.5 573.5 L894.5 573.5 L896.5 575.5 L896.5 579.5 L894.5 581.5 M896.5 570.5 L896.5 570.5 L896.5 566.5 L894.5 564.5 L887.5 564.5 L885.5 566.5 L885.5 569.5 L887.5 571.5 L889.5 571.5 L891.5 569.5 L891.5 566.5 L889.5 564.5 M888.5 560.5 L885.5 557.5 L896.5 557.5 M896.5 547.5 L885.5 547.5 L893.5 552.5 L893.5 544.5 M896.5 542.5 L885.5 542.5 L896.5 534.5 L885.5 534.5" fill="none" stroke="#a6a6a6" stroke-width="1.0" shape-rendering="crispEdges"/>
</g>
<g id="icons">
<defs>
<pattern id="dith" width="2" height="2" patternUnits="userSpaceOnUse"><rect width="2" height="2" fill="#fff"/><rect width="1" height="1" fill="#000"/><rect x="1" y="1" width="1" height="1" fill="#000"/></pattern>
<pattern id="ydith" width="2" height="2" patternUnits="userSpaceOnUse"><rect width="2" height="2" fill="#ffff00"/><rect width="1" height="1" fill="#fff"/><rect x="1" y="1" width="1" height="1" fill="#fff"/></pattern>
<pattern id="rdith" width="2" height="2" patternUnits="userSpaceOnUse"><rect width="2" height="2" fill="#f0f0f0"/><rect width="1" height="1" fill="#a00000"/><rect x="1" y="1" width="1" height="1" fill="#a00000"/></pattern>
<pattern id="ydith2" width="2" height="2" patternUnits="userSpaceOnUse"><rect width="2" height="2" fill="#ffff00"/><rect width="1" height="1" fill="#000"/><rect x="1" y="1" width="1" height="1" fill="#000"/></pattern>
</defs>
<g>
<rect x="4" y="5" width="13" height="13" fill="#000"/>
<rect x="3" y="4" width="13" height="13" fill="#800000"/>
<rect x="4" y="5" width="11" height="11" fill="#fff"/>
<rect x="5" y="7" width="3" height="2" fill="#800000"/>
<rect x="5" y="10" width="3" height="2" fill="#800000"/>
<rect x="8" y="7" width="2" height="1.5" fill="#00a000"/>
<rect x="8" y="10" width="2" height="1.5" fill="#00a000"/>
<rect x="10" y="7" width="3" height="4" fill="#800000"/>
<rect x="11" y="8" width="1" height="2" fill="#fff"/>
<rect x="9" y="13" width="7" height="4" fill="#800000"/>
<rect x="10" y="14" width="3" height="1" fill="#fff"/>
<rect x="13" y="14" width="2" height="2" fill="#ff0000"/>
</g>
<rect x="4" y="49" width="2" height="2" fill="#a0a0a0"/><rect x="5" y="50" width="1" height="1" fill="#fff" opacity="0.6"/>
<rect x="4" y="53" width="2" height="2" fill="#a0a0a0"/><rect x="5" y="54" width="1" height="1" fill="#fff" opacity="0.6"/>
<rect x="4" y="57" width="2" height="2" fill="#a0a0a0"/><rect x="5" y="58" width="1" height="1" fill="#fff" opacity="0.6"/>
<rect x="4" y="61" width="2" height="2" fill="#a0a0a0"/><rect x="5" y="62" width="1" height="1" fill="#fff" opacity="0.6"/>
<rect x="4" y="65" width="2" height="2" fill="#a0a0a0"/><rect x="5" y="66" width="1" height="1" fill="#fff" opacity="0.6"/>
<rect x="4" y="76" width="2" height="2" fill="#a0a0a0"/><rect x="5" y="77" width="1" height="1" fill="#fff" opacity="0.6"/>
<rect x="4" y="80" width="2" height="2" fill="#a0a0a0"/><rect x="5" y="81" width="1" height="1" fill="#fff" opacity="0.6"/>
<rect x="4" y="84" width="2" height="2" fill="#a0a0a0"/><rect x="5" y="85" width="1" height="1" fill="#fff" opacity="0.6"/>
<rect x="4" y="88" width="2" height="2" fill="#a0a0a0"/><rect x="5" y="89" width="1" height="1" fill="#fff" opacity="0.6"/>
<rect x="4" y="92" width="2" height="2" fill="#a0a0a0"/><rect x="5" y="93" width="1" height="1" fill="#fff" opacity="0.6"/>
<rect x="517" y="49" width="2" height="2" fill="#a0a0a0"/><rect x="518" y="50" width="1" height="1" fill="#fff" opacity="0.6"/>
<rect x="517" y="53" width="2" height="2" fill="#a0a0a0"/><rect x="518" y="54" width="1" height="1" fill="#fff" opacity="0.6"/>
<rect x="517" y="57" width="2" height="2" fill="#a0a0a0"/><rect x="518" y="58" width="1" height="1" fill="#fff" opacity="0.6"/>
<rect x="517" y="61" width="2" height="2" fill="#a0a0a0"/><rect x="518" y="62" width="1" height="1" fill="#fff" opacity="0.6"/>
<rect x="517" y="65" width="2" height="2" fill="#a0a0a0"/><rect x="518" y="66" width="1" height="1" fill="#fff" opacity="0.6"/>
<rect x="4" y="102" width="2" height="2" fill="#a0a0a0"/>
<rect x="8" y="102" width="2" height="2" fill="#a0a0a0"/>
<rect x="12" y="102" width="2" height="2" fill="#a0a0a0"/>
<rect x="16" y="102" width="2" height="2" fill="#a0a0a0"/>
<rect x="20" y="102" width="2" height="2" fill="#a0a0a0"/>
<rect x="24" y="102" width="2" height="2" fill="#a0a0a0"/>
<rect x="28" y="102" width="2" height="2" fill="#a0a0a0"/>
<rect x="32" y="102" width="2" height="2" fill="#a0a0a0"/>
<rect x="36" y="102" width="2" height="2" fill="#a0a0a0"/>
<rect x="40" y="102" width="2" height="2" fill="#a0a0a0"/>
<rect x="44" y="102" width="2" height="2" fill="#a0a0a0"/>
<g>
<path d="M14 53.5 H19 L20 55 H25 V58 H29 L25.5 63 H14 Z" fill="#000"/>
<path d="M15 55 H19 L19.5 56 H24 V58 H19 L15.5 62 Z" fill="url(#ydith)"/>
<path d="M19.5 59 H28 L25 62 H16.5 Z" fill="url(#ydith2)"/>
<path d="M25 63 H30 L27.5 65.5 Z" fill="#000"/>
</g>
<g>
<rect x="37" y="51" width="14" height="14" fill="#000"/>
<rect x="38" y="52" width="12" height="12" fill="#0000ff"/>
<rect x="40" y="52" width="8" height="6" fill="#c0c0c0"/>
<rect x="48" y="52" width="1" height="1" fill="#fff"/>
<rect x="40" y="60" width="9" height="4" fill="#000"/>
<rect x="46" y="61" width="2" height="3" fill="#c0c0c0"/>
</g>
<g shape-rendering="crispEdges">
<path d="M63.5 51.5 H73.5 L72.5 56.5 H62.5 Z" fill="#fff" stroke="#000" stroke-width="1"/>
<rect x="65" y="53" width="6" height="1" fill="#000"/>
<rect x="64" y="55" width="6" height="1" fill="#000"/>
<path d="M60.5 57.5 H71.5 L74.5 59.5 V63.5 L73.5 64.5 H60.5 L59.5 63.5 V58.5 Z" fill="#fff" stroke="#000" stroke-width="1"/>
<rect x="60" y="59" width="12" height="1" fill="#000"/>
<rect x="60" y="62" width="13" height="1" fill="#000"/>
<rect x="61" y="60" width="1" height="2" fill="#0000ff"/>
<rect x="63" y="60" width="2" height="2" fill="#ff0000"/>
<rect x="66" y="60" width="4" height="2" fill="#ffff00"/>
<rect x="72" y="58" width="1" height="1" fill="#000"/><rect x="73" y="60" width="1" height="1" fill="#000"/><rect x="72" y="61" width="1" height="1" fill="#000"/>
</g>
<g shape-rendering="crispEdges">
<rect x="83" y="57" width="9" height="8" fill="#00ffff"/>
<rect x="88" y="51" width="9" height="11" fill="#00ffff"/>
<rect x="83" y="54" width="6" height="3" fill="#000"/>
<rect x="83" y="62" width="9" height="3" fill="#000"/>
<rect x="88" y="50" width="9" height="3" fill="#000"/>
<rect x="88" y="59" width="9" height="3" fill="#000"/>
<path d="M84 58 L86 59.5 L84 61 Z" fill="#fff"/>
<g fill="#fff"><rect x="84" y="55" width="1" height="1"/><rect x="86" y="55" width="1" height="1"/><rect x="84" y="63" width="1" height="1"/><rect x="86" y="63" width="1" height="1"/><rect x="88" y="63" width="1" height="1"/><rect x="90" y="63" width="1" height="1"/><rect x="89" y="51" width="1" height="1"/><rect x="91" y="51" width="1" height="1"/><rect x="93" y="51" width="1" height="1"/><rect x="95" y="51" width="1" height="1"/><rect x="89" y="60" width="1" height="1"/><rect x="91" y="60" width="1" height="1"/><rect x="93" y="60" width="1" height="1"/><rect x="95" y="60" width="1" height="1"/><rect x="91" y="54" width="1" height="1"/><rect x="92" y="55" width="1" height="1"/></g>
</g>
<rect x="104" y="49" width="1" height="18" fill="#c8c8c8"/>
<g shape-rendering="crispEdges">
<path d="M116.5 50.5 H119 L121.5 52 L122.5 53.5 L121.5 55 L119 56.5 H116.5 Z M113 52.5 H116 M113 54.5 H116 M123 53.5 H124" fill="none" stroke="#8c8c8c" stroke-width="1"/>
<rect x="115.5" y="58.5" width="6" height="6" fill="#fff" stroke="#000" stroke-width="1.4"/>
<path d="M113 59.5 H115 M113 61.5 H115 M113 63.5 H115 M122 59.5 H124 M122 61.5 H124 M122 63.5 H124" stroke="#000" stroke-width="1"/>
</g>
<g>
<rect x="131.5" y="48.5" width="40" height="19" fill="#e6e6e6" stroke="#adadad"/>
<text x="136" y="62" font-size="12" fill="#000" textLength="16" lengthAdjust="spacingAndGlyphs">1/1</text>
<path d="M158.5 56 H164.5 L161.5 59.5 Z" fill="#000"/>
</g>
<rect x="174" y="49" width="1" height="18" fill="#c8c8c8"/>
<g>
<path d="M182 55 L186 52 L188 54 V63 L184 66 L182 64 Z" fill="#c8c800" stroke="#0000a0" stroke-width="1.2"/>
<path d="M188 54 L192 51.5 L196 52.5 V61 L192 64 L188 63 Z" fill="#c8c800" stroke="#404000" stroke-width="0.8"/>
<rect x="189.5" y="55" width="1.5" height="8" fill="#0000a0"/>
<path d="M184 57 V64" stroke="#0000a0" stroke-width="1.5"/>
</g>
<rect x="203" y="49" width="1" height="18" fill="#c8c8c8"/>
<g>
<text x="211" y="57.5" font-size="8" font-weight="bold" font-family="Liberation Mono" fill="#000" textLength="13" lengthAdjust="spacingAndGlyphs">SCR</text>
<path d="M210 50 V64" stroke="#000" stroke-width="1" stroke-dasharray="1 1"/>
<path d="M225 50 V58" stroke="#000" stroke-width="1" stroke-dasharray="1 1"/>
<path d="M212 59.5 H223 M212 61.5 H219 M212 63.5 H224" stroke="#000" stroke-width="1" stroke-dasharray="2 1"/>
<path d="M221 62 L226 63.5 L223 65.5 Z" fill="#000"/>
</g>
<g>
<text x="234" y="57.5" font-size="8" font-weight="bold" font-family="Liberation Mono" fill="#000" textLength="13" lengthAdjust="spacingAndGlyphs">ULP</text>
<path d="M233 50 V64" stroke="#000" stroke-width="1" stroke-dasharray="1 1"/>
<path d="M248 50 V58" stroke="#000" stroke-width="1" stroke-dasharray="1 1"/>
<path d="M235 59.5 H246 M235 61.5 H242 M235 63.5 H247" stroke="#000" stroke-width="1" stroke-dasharray="2 1"/>
<path d="M244 62 L249 63.5 L246 65.5 Z" fill="#000"/>
</g>
<rect x="256" y="49" width="1" height="18" fill="#c8c8c8"/>
<g>
<line x1="271.5" y1="58.5" x2="277.5" y2="65.0" stroke="#000" stroke-width="3.4"/>
<line x1="272.0" y1="59.0" x2="276.8" y2="64.3" stroke="#e8e800" stroke-width="1.6"/>
<circle cx="267.5" cy="54.5" r="5.3" fill="#fff" stroke="#000" stroke-width="1.4"/>
<rect x="264.0" y="52.5" width="7" height="4" fill="none" stroke="#0000ff" stroke-width="1" stroke-dasharray="1 1"/><rect x="264.0" y="52.5" width="7" height="4" fill="none" stroke="#ff0000" stroke-width="1" stroke-dasharray="1 1" stroke-dashoffset="1"/>
</g>
<g>
<line x1="294.5" y1="58.5" x2="300.5" y2="65.0" stroke="#000" stroke-width="3.4"/>
<line x1="295.0" y1="59.0" x2="299.8" y2="64.3" stroke="#e8e800" stroke-width="1.6"/>
<circle cx="290.5" cy="54.5" r="5.3" fill="#fff" stroke="#000" stroke-width="1.4"/>
<path d="M287.0 54.5 H294.0 M290.5 51.0 V58.0" stroke="#ff0000" stroke-width="1.2"/><rect x="290.0" y="54.0" width="1" height="1" fill="#0000ff"/><path d="M287.5 64.5 H289.5" stroke="#ff0000" stroke-width="1.5"/>
</g>
<g>
<line x1="317.5" y1="58.5" x2="323.5" y2="65.0" stroke="#000" stroke-width="3.4"/>
<line x1="318.0" y1="59.0" x2="322.8" y2="64.3" stroke="#e8e800" stroke-width="1.6"/>
<circle cx="313.5" cy="54.5" r="5.3" fill="#fff" stroke="#000" stroke-width="1.4"/>
<path d="M312.0 53.5 H315.0" stroke="#ff0000" stroke-width="1.2"/><path d="M307.5 64.5 H312.5" stroke="#ff0000" stroke-width="1.2" stroke-dasharray="1 1"/><path d="M308.5 64.5 H313.5" stroke="#0000ff" stroke-width="1.2" stroke-dasharray="1 1"/>
</g>
<g>
<line x1="340.5" y1="58.5" x2="346.5" y2="65.0" stroke="#000" stroke-width="3.4"/>
<line x1="341.0" y1="59.0" x2="345.8" y2="64.3" stroke="#e8e800" stroke-width="1.6"/>
<circle cx="336.5" cy="54.5" r="5.3" fill="#fff" stroke="#000" stroke-width="1.4"/>
<path d="M334.0 53.0 H339.0 M334.0 56.0 H339.0" stroke="#ff0000" stroke-width="1.2" stroke-dasharray="1 1"/><path d="M335.0 53.0 H339.0 M335.0 56.0 H339.0" stroke="#0000ff" stroke-width="1.2" stroke-dasharray="1 1"/><path d="M333.5 63.0 H337.5 M333.5 65.0 H337.5" stroke="#ff0000" stroke-width="1" stroke-dasharray="1 1"/><path d="M334.5 63.0 H337.5 M334.5 65.0 H337.5" stroke="#0000ff" stroke-width="1" stroke-dasharray="1 1"/>
</g>
<g>
<path d="M355.5 60 V65.5 H368" fill="none" stroke="#000" stroke-width="1.2"/>
<rect x="361" y="52" width="7.5" height="9" fill="#fff" stroke="#000" stroke-width="1.2"/>
<line x1="363" y1="60" x2="367.5" y2="64.5" stroke="#000" stroke-width="3"/>
<line x1="363.5" y1="60.5" x2="367" y2="64" stroke="#e8e800" stroke-width="1.4"/>
<path d="M366 63 H370 L368 66.5 Z" fill="#000"/>
<circle cx="359" cy="55.5" r="4.8" fill="#fff" stroke="#000" stroke-width="1.4"/>
<rect x="356.8" y="53.5" width="4.5" height="4" fill="none" stroke="#0000ff" stroke-width="1"/>
<rect x="356.8" y="53.5" width="4.5" height="4" fill="none" stroke="#ff0000" stroke-width="1" stroke-dasharray="1 1"/>
</g>
<rect x="376" y="49" width="1" height="18" fill="#c8c8c8"/>
<g>
<path d="M386.5 56 Q391 51.5 395 54 Q397.5 56.5 395.5 60" fill="none" stroke="#000" stroke-width="1.6"/>
<path d="M384.5 60 L385.5 53.5 L390.5 58 Z" fill="#000"/>
<path d="M418 56 Q413.5 51.5 409.5 54 Q407 56.5 409 60" fill="none" stroke="#909090" stroke-width="1.4"/>
<path d="M420 60 L419 53.5 L414 58 Z" fill="#909090"/>
</g>
<rect x="428" y="49" width="1" height="18" fill="#c8c8c8"/>
<g>
<path d="M438.5 50 H447.5 L451.5 54 V62.5 L447.5 66.5 H438.5 L434.5 62.5 V54 Z" fill="#ee1111"/>
<text x="436.2" y="61.2" font-size="7" font-weight="bold" fill="#fff" textLength="13.6" lengthAdjust="spacingAndGlyphs">STOP</text>
</g>
<g>
<rect x="462" y="50" width="9" height="16" fill="url(#dith)"/>
<rect x="462" y="50" width="9" height="16" fill="#000" opacity="0.25"/>
<path d="M464 62 L466.5 59.5 L469 62 L466.5 64.5 Z" fill="#00c000"/>
</g>
<rect x="480" y="49" width="1" height="18" fill="#c8c8c8"/>
<rect x="486" y="49" width="1" height="18" fill="#c8c8c8"/>
<g>
<text x="495" y="66" font-size="17" font-weight="bold" fill="#000" textLength="11" lengthAdjust="spacingAndGlyphs">?</text>
<text x="494" y="65" font-size="17" font-weight="bold" fill="#ffff00" stroke="#000" stroke-width="0.6" textLength="11" lengthAdjust="spacingAndGlyphs">?</text>
</g>
<rect x="514" y="44" width="1" height="27" fill="#c8c8c8"/>
<g>
<text x="527" y="58.5" font-size="10.5" font-weight="bold" fill="#c8506e" textLength="31" lengthAdjust="spacingAndGlyphs">design</text>
<text x="549.5" y="66" font-size="9.5" font-weight="bold" fill="#3a9ad0" textLength="19" lengthAdjust="spacingAndGlyphs">link</text>
<path d="M575 55.5 H583 L579 60 Z" fill="#000"/>
</g>
<g fill="#000"><rect x="14" y="78" width="1" height="1"/><rect x="14" y="81" width="1" height="1"/><rect x="14" y="84" width="1" height="1"/><rect x="14" y="87" width="1" height="1"/><rect x="14" y="90" width="1" height="1"/><rect x="17" y="78" width="1" height="1"/><rect x="17" y="81" width="1" height="1"/><rect x="17" y="84" width="1" height="1"/><rect x="17" y="87" width="1" height="1"/><rect x="17" y="90" width="1" height="1"/><rect x="20" y="78" width="1" height="1"/><rect x="20" y="81" width="1" height="1"/><rect x="20" y="84" width="1" height="1"/><rect x="20" y="87" width="1" height="1"/><rect x="20" y="90" width="1" height="1"/><rect x="23" y="78" width="1" height="1"/><rect x="23" y="81" width="1" height="1"/><rect x="23" y="84" width="1" height="1"/><rect x="23" y="87" width="1" height="1"/><rect x="23" y="90" width="1" height="1"/><rect x="26" y="78" width="1" height="1"/><rect x="26" y="81" width="1" height="1"/><rect x="26" y="84" width="1" height="1"/><rect x="26" y="87" width="1" height="1"/><rect x="26" y="90" width="1" height="1"/><path d="M24 88 H30 L27 91 Z"/></g>
<rect x="35" y="77" width="1" height="16" fill="#c8c8c8"/>
<g><rect x="43.5" y="78.5" width="12" height="12" fill="none" stroke="#909090"/><path d="M49.5 78 V91 M43 84.5 H56" stroke="#909090"/><rect x="49.5" y="78.5" width="6" height="6" fill="#808080" stroke="#000"/></g>
<rect x="62.5" y="74.5" width="22" height="20" fill="#bad8f3" stroke="#62a6e3"/>
<rect x="67" y="78" width="13" height="13" fill="#bad8f3"/>
<g><rect x="67.5" y="78.5" width="12" height="12" fill="none" stroke="#909090"/><path d="M73.5 78 V91 M67 84.5 H80" stroke="#909090"/><rect x="67.5" y="78.5" width="6" height="6" fill="#808080" stroke="#000"/></g>
<g><rect x="89.5" y="78.5" width="12" height="12" fill="none" stroke="#909090"/><path d="M95.5 78 V91 M89 84.5 H102" stroke="#909090"/><rect x="89.5" y="84.5" width="6" height="6" fill="#808080" stroke="#000"/></g>
<g><rect x="112.5" y="78.5" width="12" height="12" fill="none" stroke="#909090"/><path d="M118.5 78 V91 M112 84.5 H125" stroke="#909090"/><rect x="118.5" y="84.5" width="6" height="6" fill="#808080" stroke="#000"/></g>
<rect x="133" y="77" width="1" height="16" fill="#c8c8c8"/>
<rect x="137.5" y="74.5" width="22" height="20" fill="#bad8f3" stroke="#62a6e3"/>
<g><rect x="142.5" y="78.5" width="12" height="12" fill="#bad8f3" stroke="#909090"/><path d="M142 84.5 H149" stroke="#909090"/><rect x="148.5" y="78.5" width="6" height="12" fill="#808080" stroke="#000"/><path d="M148 84.5 H155" stroke="#000"/></g>
<g><rect x="164.5" y="78.5" width="12" height="12" fill="none" stroke="#909090"/><path d="M170 84.5 H177" stroke="#909090"/><rect x="164.5" y="78.5" width="6" height="12" fill="#808080" stroke="#000"/><path d="M164 84.5 H171" stroke="#000"/></g>
<rect x="5" y="154" width="40" height="1" fill="#d0d0d0"/>
<rect x="5" y="380" width="40" height="1" fill="#d0d0d0"/>
<rect x="5" y="518" width="40" height="1" fill="#d0d0d0"/>
<circle cx="13" cy="115" r="1.9" fill="#000"/><path d="M10 118 H15 V124.5 H16 V126 H10 V124.5 H11 V119.5 H10 Z" fill="#000"/>
<path d="M28.5 118 Q35 110 43.5 118 Q35 126 28.5 118 Z" fill="#fff" stroke="#808000" stroke-width="1.3"/><circle cx="35.5" cy="118.5" r="2.8" fill="#00ffff"/><path d="M34 118.5 H37 M35.5 117 V120" stroke="#000" stroke-width="1.2"/>
<rect x="12" y="138" width="8" height="8" fill="#008000"/><rect x="9" y="136" width="8" height="8" fill="#800000"/><rect x="6" y="134" width="8" height="8" fill="#000080"/><path d="M16 145 H21.5 L18.75 148 Z" fill="#000"/>
<path d="M30.5 134 V148 M28 147.5 H43" stroke="#000" stroke-width="1.3" stroke-dasharray="1.5 1"/><path d="M28.5 134.5 H32.5 M28.5 147.5 H32.5" stroke="#000" stroke-width="1"/><path d="M32.5 141.5 H38.5 M35.5 138.5 V144.5" stroke="#000" stroke-width="1.3"/><text x="36" y="138.5" font-size="7" font-weight="bold" fill="#000" textLength="8" lengthAdjust="spacingAndGlyphs">90</text><path d="M41 145.5 L43.5 147.5 L41 149.5 Z" fill="#000"/>
<rect x="2.5" y="158.5" width="22" height="21" fill="#bad8f3" stroke="#62a6e3"/>
<path d="M6.5 169.5 H20.5 M13.5 162.5 V176.5" stroke="#000" stroke-width="1.6"/><path d="M13.5 161.5 L10.5 165 H16.5 Z M13.5 177.5 L10.5 174 H16.5 Z M5.5 169.5 L9 166.5 V172.5 Z M21.5 169.5 L18 166.5 V172.5 Z" fill="#000"/>
<circle cx="31.5" cy="164.5" r="1.8" fill="none" stroke="#000" stroke-width="1.1"/><path d="M31.5 166.5 V171 M29.0 168.5 H34.0 M31.5 171 L29.0 175 M31.5 171 L34.0 175" stroke="#000" stroke-width="1.1" fill="none"/>
<circle cx="40.5" cy="164.5" r="1.8" fill="none" stroke="#000" stroke-width="1.1"/><path d="M40.5 166.5 V171 M38.0 168.5 H43.0 M40.5 171 L38.0 175 M40.5 171 L43.0 175" stroke="#000" stroke-width="1.1" fill="none"/>
<path d="M12.5 183.5 V199" stroke="#000" stroke-width="1" stroke-dasharray="1 1"/><path d="M10 187 H6.5 V194.5 H10 M6.5 191 H10 M15 187 H18.5 V194.5 H15 M15 191 H18.5" fill="none" stroke="#000" stroke-width="1.3"/>
<rect x="32.5" y="187" width="3.5" height="12" fill="#000"/><rect x="28" y="191" width="12" height="3" fill="#808080"/><rect x="32.5" y="187" width="3.5" height="12" fill="#000" opacity="0.9"/><path d="M36 184 Q41.5 185 42.5 192" fill="none" stroke="#000" stroke-width="1"/><circle cx="36" cy="184.5" r="1.2" fill="#000"/>
<rect x="6.5" y="206.5" width="13" height="13" fill="none" stroke="#000" stroke-width="1.2" stroke-dasharray="2 1.5"/>
<path d="M30 219 L37 212 Q35.5 208 38.5 206.5 L40.5 206 L38.5 209 L40 210.5 L43 208.5 Q43 212.5 39 213.5 L32 220.5 Z" fill="#606060" stroke="#303030" stroke-width="0.7"/>
<path d="M9 228.5 L18.5 238" stroke="#000" stroke-width="2.2"/><path d="M10 228.5 L18 236.5" stroke="#fff" stroke-width="0.6"/><path d="M14.5 236 L17 239 L20 240 V243 H9 L12.5 240 Z" fill="#ffff00"/><path d="M14.5 236 L17 239" stroke="#000" stroke-width="0.8"/>
<path d="M6.5 250.5 L19 262.5 M19 250.5 L7.5 261.5" stroke="#000" stroke-width="2"/><rect x="6" y="260" width="3" height="2.5" fill="#000"/>
<path d="M32 250.5 H36 Q41 250.5 41.5 256 Q41 261.5 36 261.5 H32 Z" fill="none" stroke="#800000" stroke-width="1.2"/><path d="M29 252.5 H32 M29 256 H32 M29 259.5 H32 M41.5 256 H44" stroke="#800000" stroke-width="1.2"/><path d="M36.5 256 V264.5 L38.5 262.5 L40 265.5 L41.5 265 L40 262 H43 Z" fill="#000"/>
<path d="M8 273 V285" stroke="#000" stroke-width="1.3"/><path d="M8 272 L5.5 275 H10.5 Z M8 286 L5.5 283 H10.5 Z" fill="#000"/><path d="M13 273.5 H17 Q21 274 21 279 Q21 284 17 284.5 H13 V273.5 M11 276 H13 M11 282 H13" fill="none" stroke="#800000" stroke-width="1.3"/>
<rect x="29.5" y="275.5" width="3" height="6" fill="#fff" stroke="#000" stroke-width="1.2"/><rect x="40.5" y="275.5" width="3" height="6" fill="#fff" stroke="#000" stroke-width="1.2"/><path d="M33 278.5 H39" stroke="#000" stroke-width="1"/><path d="M37.5 276.5 L39.5 278.5 L37.5 280.5 Z" fill="#000"/><circle cx="31" cy="273.5" r="1.3" fill="#008000"/><circle cx="31" cy="283.5" r="1.3" fill="#008000"/><circle cx="42" cy="273.5" r="1.4" fill="#008000"/><path d="M39.5 283.5 H44.5 L42 286.5 Z" fill="#000"/>
<path d="M8 293.5 H11 Q15 293.5 15 297.5 Q15 301.5 11 301.5 H8 Z M6 295.5 H8 M6 299.5 H8 M15 297.5 H17" fill="none" stroke="#800000" stroke-width="1.3"/><path d="M14 301.5 H17 Q21 301.5 21 305 Q21 308.5 17 308.5 H14 Z M12 303.5 H14 M12 306.5 H14" fill="none" stroke="#800000" stroke-width="1.3"/><path d="M16.5 294 Q20 295 20.5 299 M10 306.5 Q6 306 5.5 302" fill="none" stroke="#000" stroke-width="1.2"/>
<g shape-rendering="crispEdges"><text x="8" y="321.3" font-size="7" font-weight="bold" fill="#000" stroke="#000" stroke-width="0.3" textLength="10" lengthAdjust="spacingAndGlyphs">R2</text><rect x="6" y="323" width="14" height="1" fill="#a00000"/><rect x="8.5" y="321.5" width="7" height="3" fill="#fff" stroke="#a00000" stroke-width="1"/><text x="7.5" y="331" font-size="7" font-weight="bold" fill="#8c8c8c" textLength="11.5" lengthAdjust="spacingAndGlyphs">10k</text></g>
<g shape-rendering="crispEdges"><text x="31" y="321.3" font-size="7" font-weight="bold" fill="#8c8c8c" textLength="10" lengthAdjust="spacingAndGlyphs">R2</text><rect x="29" y="323" width="14" height="1" fill="#a00000"/><rect x="31.5" y="321.5" width="7" height="3" fill="#fff" stroke="#a00000" stroke-width="1"/><text x="31" y="331" font-size="7" font-weight="bold" fill="#000" stroke="#000" stroke-width="0.3" textLength="8" lengthAdjust="spacingAndGlyphs">10</text><path d="M39 326 V331 L40.5 329.5 L42 331.5 L43 331 L42 329 H44 Z" fill="#000"/></g>
<g shape-rendering="crispEdges"><rect x="7.5" y="341.5" width="10" height="7" fill="#fff" stroke="#000" stroke-width="1"/><rect x="7" y="341" width="1" height="8" fill="#000"/><rect x="7" y="344" width="2" height="2" fill="#f0f0f0"/><rect x="9" y="342" width="1" height="1" fill="#000"/><path d="M11 343.5 H16 M11 346.5 H16" stroke="#909090" stroke-width="1" stroke-dasharray="1 1"/><rect x="12" y="338" width="1" height="2" fill="#000"/><rect x="14" y="338" width="1" height="2" fill="#000"/><rect x="16" y="338" width="1" height="2" fill="#000"/><rect x="12" y="350" width="1" height="2" fill="#000"/><rect x="14" y="350" width="2" height="2" fill="#000"/><rect x="17" y="350" width="1" height="2" fill="#000"/></g>
<path d="M30 339 H39 L30 348 Z" fill="#8c8c8c"/><path d="M31.5 352 V348 Q32 341.5 38.5 341 H43" fill="none" stroke="#000" stroke-width="2.2"/>
<path d="M8 373.5 L19.5 362" stroke="#8c8c8c" stroke-width="2"/><path d="M7 374 V366 L11 362 Q14 360.5 20 360.5" fill="none" stroke="#000" stroke-width="2.2"/>
<g fill="none" stroke="#900000" stroke-width="1"><path d="M30.5 359.5 H32.5 Q34.5 359.5 34.5 362 Q34.5 364.5 32.5 364.5 H30.5 Z M38.5 359.5 H40.5 Q42.5 359.5 42.5 362 Q42.5 364.5 40.5 364.5 H38.5 Z M30.5 366.5 H32.5 Q34.5 366.5 34.5 369 Q34.5 371.5 32.5 371.5 H30.5 Z M38.5 366.5 H40.5 Q42.5 366.5 42.5 369 Q42.5 371.5 40.5 371.5 H38.5 Z"/><path d="M28 361 H30 M28 363 H30 M36 361 H38 M36 363 H38 M28 368 H30 M28 370 H30 M36 368 H38 M36 370 H38 M35 362 H36 M43 362 H44 M43 369 H44" stroke-width="1.2"/></g><path d="M31 368 V374 L32.5 372.5 L34 374.5 L35 374 L34 372 H36 Z" fill="#000"/>
<path d="M7 401 L19 389" stroke="#000" stroke-width="2.2" stroke-linecap="round"/>
<text x="30.5" y="401.5" font-size="16" font-family="Liberation Serif" font-weight="bold" fill="#000" textLength="11" lengthAdjust="spacingAndGlyphs">T</text>
<circle cx="13" cy="416.5" r="6" fill="none" stroke="#000" stroke-width="2"/><path d="M30.5 416.5 A6 6 0 1 1 39 421.5" fill="none" stroke="#000" stroke-width="2"/>
<rect x="6" y="433" width="14" height="12" fill="url(#dith)"/><rect x="6" y="433" width="14" height="12" fill="none" stroke="#000" stroke-width="1"/><path d="M29.5 436.5 L33 431.5 H42 V446 H29.5 Z" fill="url(#dith)" stroke="#000" stroke-width="1"/>
<path d="M6 457.5 H17 L19.5 460 V468" fill="none" stroke="#000080" stroke-width="2.2"/><path d="M13 461 V467 M15 461 V467 M17 463 V467" stroke="#008000" stroke-width="1" stroke-dasharray="1 1"/>
<path d="M29 457 H40 L43 460 V468" fill="none" stroke="#000080" stroke-width="1.5" stroke-dasharray="1 1"/><path d="M35 461 H41 M35 463.5 H41 M35 466 H41" stroke="#008000" stroke-width="1.2"/>
<circle cx="12.5" cy="482.5" r="2.8" fill="#008000"/><path d="M6 482.5 H19 M12.5 476 V489" stroke="#008000" stroke-width="1" stroke-dasharray="1 2"/>
<text x="29" y="483.5" font-size="7" font-weight="bold" font-family="Liberation Mono" fill="#000" textLength="14" lengthAdjust="spacingAndGlyphs">ABC</text><path d="M29 485.5 L39 485.5" stroke="#008000" stroke-width="1.2" stroke-dasharray="1 1"/><path d="M38 485 L43 489.5" stroke="#008000" stroke-width="1.4"/>
<text x="6" y="504" font-size="7" font-weight="bold" font-family="Liberation Mono" fill="#000" stroke="#000" stroke-width="0.2" textLength="13" lengthAdjust="spacingAndGlyphs">&gt;AT</text><rect x="6" y="506" width="13" height="7" fill="url(#rdith)"/><rect x="7" y="507" width="11" height="5" fill="#f0f0f0"/><rect x="8" y="508" width="9" height="3" fill="url(#rdith)" opacity="0.5"/>
<path d="M29.5 498 V512 M42.5 498 V512 M30 509 H42" stroke="#000" stroke-width="1.3"/><path d="M30 509 L33 507 V511 Z M42 509 L39 507 V511 Z" fill="#000"/>
<circle cx="12.5" cy="532" r="6" fill="#fff" stroke="#000" stroke-width="1.2"/><path d="M5 532 H8 M17 532 H20" stroke="#008000" stroke-width="1.3"/><path d="M10 529 H12.5 Q15.5 529 15.5 532 Q15.5 535 12.5 535 H10 Z M8.5 530.5 H10 M8.5 533.5 H10" fill="none" stroke="#a00000" stroke-width="1.2"/><path d="M16.5 536.5 L20 540" stroke="#000" stroke-width="2.4"/><path d="M17 537 L19.5 539.5" stroke="#e0e000" stroke-width="1"/>
<circle cx="36" cy="533" r="7.6" fill="#ffff00" stroke="#303030" stroke-width="1"/><path d="M36 528 V534.5" stroke="#000" stroke-width="2.6" stroke-linecap="round"/><circle cx="36" cy="537.2" r="1.3" fill="#000"/>
<g>
<rect x="53.5" y="122.5" width="55" height="58" fill="#f4f4f4" stroke="#cfcfcf"/>
<rect x="55" y="124" width="52" height="39" fill="#c4e0fa"/>
<g stroke="#88c4c4" stroke-width="0.9" fill="none">
<path d="M57 131 H106"/><path d="M66.5 131 V146"/>
</g>
<g stroke="#a888b8" stroke-width="0.8" fill="none" opacity="0.75">
<rect x="65.5" y="146.5" width="26" height="12"/>
<circle cx="66.5" cy="131" r="2"/>
<path d="M66.5 126 V133 M66.5 136 V139"/>
<path d="M72 131 L75 131 M77.5 131 H80.5 M86 131 H89 M93.5 131 H96.5 M102 131 H104.5"/>
<path d="M58 131 H60 M104.5 129.5 V132.5"/>
<path d="M66.5 145 V147 M66.5 158 V160"/><path d="M69.4 145 V147 M69.4 158 V160"/><path d="M72.3 145 V147 M72.3 158 V160"/><path d="M75.2 145 V147 M75.2 158 V160"/><path d="M78.1 145 V147 M78.1 158 V160"/><path d="M81.0 145 V147 M81.0 158 V160"/><path d="M83.9 145 V147 M83.9 158 V160"/><path d="M86.8 145 V147 M86.8 158 V160"/><path d="M89.7 145 V147 M89.7 158 V160"/><path d="M92.6 145 V147 M92.6 158 V160"/>
<path d="M67 149 V151 M70 149 V151 M73 149 V151 M76 149 V151 M79 149 V151 M82 149 V151 M85 149 V151 M88 149 V151 M70 153 V156 M73 152 V156 M76 153 V156 M81 154 V156 M85 153 V156"/>
</g>
<text x="79" y="177" font-size="12" fill="#000" textLength="4.5" lengthAdjust="spacingAndGlyphs">1</text>
</g>
<defs>
<linearGradient id="tbg" x1="0" y1="0" x2="1" y2="0">
<stop offset="0" stop-color="#1a1a1a"/><stop offset="0.1" stop-color="#1e1e1e"/><stop offset="0.22" stop-color="#161616"/><stop offset="0.32" stop-color="#111111"/><stop offset="1" stop-color="#0f0f0f"/>
</linearGradient></defs>
<rect x="0" y="728" width="1366" height="40" fill="url(#tbg)"/>
<rect x="294" y="728" width="44" height="40" fill="#2b2b2b"/><rect x="338" y="728" width="1" height="40" fill="#161616"/><rect x="339" y="728" width="3" height="40" fill="#262626"/>
<rect x="102" y="766" width="40" height="2" fill="#b8232a"/><rect x="294" y="766" width="44" height="2" fill="#b8232a"/><rect x="339" y="766" width="3" height="2" fill="#b8232a"/><rect x="347" y="766" width="40" height="2" fill="#b8232a"/>
<rect x="1361" y="728" width="1" height="40" fill="#4a4a4a"/>
<path d="M16 741.5 L23 740.5 V747.3 H16 Z M24 740.3 L32.3 739.3 V747.3 H24 Z M16 748.3 H23 V755 L16 754 Z M24 748.3 H32.3 V756 L24 755.2 Z" fill="#c8c8c8"/>
<rect x="66.5" y="741.5" width="11" height="13" fill="none" stroke="#fff" stroke-width="1.3"/><path d="M64 743.5 H62.5 V752.5 H64 M80 743.5 H81.5 V752.5 H80" fill="none" stroke="#fff" stroke-width="1.2"/>
<g>
<path d="M122 747.5 L112.647 742.1 A10.8 10.8 0 0 1 131.353 742.1 Z" fill="#db4437"/>
<path d="M122 747.5 L131.353 742.1 A10.8 10.8 0 0 1 122 758.3 Z" fill="#f4c20d"/>
<path d="M122 747.5 L122 758.3 A10.8 10.8 0 0 1 112.647 742.1 Z" fill="#0f9d58"/>
<circle cx="122" cy="747.5" r="5" fill="#fff"/>
<circle cx="122" cy="747.5" r="3.9" fill="#4285f4"/>
</g>
<g>
<path d="M160 750 Q159 741 168 739 Q177 737.5 180 743 Q181.5 747 177 749 Q174 750.5 176 753 Q176.5 757.5 169 758 Q161 758 160 750 Z" fill="#b9d8ee" stroke="#7fa6c4" stroke-width="0.6"/>
<circle cx="163.5" cy="749" r="1.6" fill="#e04040"/><circle cx="167" cy="744.5" r="1.6" fill="#60c040"/><circle cx="171.5" cy="742.5" r="1.6" fill="#f0c020"/><circle cx="168" cy="750" r="1.3" fill="#1a1a1a"/>
<path d="M182.5 737 L170.5 757" stroke="#e08a20" stroke-width="2"/><path d="M183.5 736 L181 740" stroke="#f0d080" stroke-width="2.5"/>
</g>
<rect x="210" y="740" width="20" height="15" fill="#1ba1e2"/><circle cx="217" cy="746.5" r="3.5" fill="none" stroke="#fff" stroke-width="0.9"/><path d="M217 746.5 V743 A3.5 3.5 0 0 1 220.5 746.5 Z" fill="#f08020"/><path d="M222 743.5 H227 M222 746.5 H227 M222 749.5 H227" stroke="#fff" stroke-width="1"/><path d="M212.5 752 H219" stroke="#fff" stroke-width="0.8" stroke-dasharray="1 1"/>
<path d="M258.5 739 H265 L266.5 740.5 H279.5 V757.5 H258.5 Z" fill="#f4c430"/><rect x="258.5" y="742" width="21" height="15.5" fill="#ffe680"/><path d="M262.5 758 V749 H275.5 V758 H272 V752.5 H266 V758 Z" fill="#3cc8f0"/>
<path d="M310 752 L314 749 L313 745 L318 741 L321 737.5 L324 739 L322 743 L323 747 L326 750 L319 752 L317 755 L312 758.5 L314 754 Z" fill="#ff3a3a"/>
<rect x="356" y="738" width="22" height="17" fill="#3b7fc0"/><rect x="357.5" y="739.5" width="19" height="14" fill="#d8e8f0"/><path d="M357.5 748 Q364 744 368 747 Q372 749 376.5 747.5 V753.5 H357.5 Z" fill="#4a8a5a"/><rect x="357.5" y="750.5" width="19" height="3" fill="#4a7aa0"/>
<path d="M1134 750 L1137.5 746.5 L1141 750 Z" fill="#fff"/>
<path d="M1158 745.5 H1160.5 L1164 742.5 V754 L1160.5 751 H1158 Z" fill="none" stroke="#fff" stroke-width="1"/><path d="M1166 745.5 Q1167.5 748 1166 750.5 M1168.5 743.5 Q1171 748 1168.5 752.5" fill="none" stroke="#fff" stroke-width="1"/>
<path d="M1182 755 A11 11 0 0 1 1193 744 M1184.5 755 A8.5 8.5 0 0 1 1193 746.5 M1187 755 A6 6 0 0 1 1193 749" fill="none" stroke="#d0d0d0" stroke-width="1"/><rect x="1190.5" y="751.5" width="3.5" height="3.5" fill="#fff"/>
<rect x="1207.5" y="745.5" width="11" height="7" fill="none" stroke="#fff" stroke-width="1"/><rect x="1219" y="747.5" width="1.5" height="3" fill="#fff"/><rect x="1209" y="747" width="4" height="4" fill="#fff"/><path d="M1204.5 742 V745 M1207 742 V745 M1203.5 745.5 H1208 V747 Q1206 749 1205.5 752" fill="none" stroke="#fff" stroke-width="1"/>
<rect x="1230" y="740.5" width="15" height="13" fill="#fff"/><path d="M1232 743.5 H1243 M1232 746 H1243 M1232 748.5 H1238" stroke="#101010" stroke-width="1"/><circle cx="1242" cy="752" r="4.3" fill="#101010" stroke="#fff" stroke-width="1.2"/><path d="M1239.8 752 H1244.2" stroke="#fff" stroke-width="1.2"/>
<g fill="#fff" font-size="12">
<text x="1258" y="751.5" textLength="20" lengthAdjust="spacingAndGlyphs">CES</text>
<text x="1310.5" y="743" textLength="26.5" lengthAdjust="spacingAndGlyphs">13:23</text>
<text x="1296" y="761" textLength="54" lengthAdjust="spacingAndGlyphs">24.05.2015</text>
</g>
</g>
</svg>
</body></html>
